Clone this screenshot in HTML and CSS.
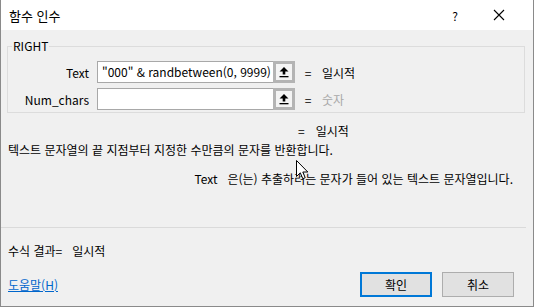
FILE: index.html
```html
<!DOCTYPE html>
<html lang="ko">
<head>
<meta charset="utf-8">
<title>함수 인수</title>
<link rel="stylesheet" href="styles.css">
</head>
<body>
<div class="window">
  <div class="titlebar">
    <span class="title">함수 인수</span>
    <span class="help">?</span>
    <span class="close">
      <svg width="12" height="12" viewBox="0 0 12 12"><path d="M1 1L11 11M11 1L1 11" stroke="#000" stroke-width="1.1" fill="none"/></svg>
    </span>
  </div>
  <div class="content">
    <fieldset class="group">
      <legend>RIGHT</legend>
      <div class="args">
        <label class="arg-label">Text</label>
        <div class="input">"000" &amp; randbetween(0, 9999)</div>
        <div class="pick"><svg width="12" height="12" viewBox="0 0 12 12"><path d="M6 1L10.5 5.5H7.3V8.5H4.7V5.5H1.5Z" fill="#000"/><rect x="1.5" y="10" width="9" height="1.3" fill="#000"/></svg></div>
        <span class="eq">=</span>
        <span class="val">일시적</span>

        <label class="arg-label">Num_chars</label>
        <div class="input"></div>
        <div class="pick"><svg width="12" height="12" viewBox="0 0 12 12"><path d="M6 1L10.5 5.5H7.3V8.5H4.7V5.5H1.5Z" fill="#000"/><rect x="1.5" y="10" width="9" height="1.3" fill="#000"/></svg></div>
        <span class="eq">=</span>
        <span class="val muted">숫자</span>
      </div>
    </fieldset>
    <div class="result-line"><span class="eq">=</span><span class="val">일시적</span></div>
    <p class="desc">텍스트 문자열의 끝 지점부터 지정한 수만큼의 문자를 반환합니다.</p>
    <p class="argdesc"><span class="argname">Text</span>은(는) 추출하려는 문자가 들어 있는 텍스트 문자열입니다.</p>
    <div class="sep"></div>
    <p class="formula">수식 결과=&nbsp;&nbsp;&nbsp;일시적</p>
    <div class="footer">
      <a class="helplink" href="#">도움말(H)</a>
      <div class="buttons">
        <button class="btn primary">확인</button>
        <button class="btn">취소</button>
      </div>
    </div>
  </div>
  <svg class="cursor" width="13" height="20" viewBox="0 0 13 20"><path d="M0.5 0.5V16.5L4.3 12.8L6.8 18.7L9.2 17.7L6.8 12H11.8Z" fill="#fff" stroke="#000" stroke-width="1"/></svg>
</div>
</body>
</html>
```
FILE: styles.css
```css
* { box-sizing: border-box; }
html, body { margin: 0; padding: 0; }
body {
  width: 534px;
  height: 307px;
  overflow: hidden;
  font-family: "Noto Sans CJK KR", "Noto Sans", sans-serif;
  font-size: 12px;
  color: #000;
}
.window {
  position: relative;
  width: 534px;
  height: 307px;
  background: #f0f0f0;
  border: 1px solid #8a8a8a;
  border-top: none;
  display: flex;
  flex-direction: column;
}
.titlebar {
  height: 30px;
  background: #fff;
  display: flex;
  align-items: center;
  padding-left: 8px;
  flex: none;
}
.title { font-size: 13px; flex: 1; }
.help { width: 20px; text-align: center; margin-right: 24px; font-size: 12px; }
.close { width: 20px; display: flex; justify-content: center; margin-right: 24px; }
.content {
  flex: 1;
  display: flex;
  flex-direction: column;
}
.group {
  margin: 9px 8px 0 6px;
  padding: 8px 0 2px 0;
  border: 1px solid #dcdcdc;
  min-width: 0;
}
.group legend {
  padding: 0 1px;
  margin-left: 4px;
  font-size: 12px;
  line-height: 14px;
}
.args {
  display: grid;
  grid-template-columns: 89px 176px 22px 26px auto;
  grid-auto-rows: 22px;
  row-gap: 5px;
  align-items: center;
}
.args .arg-label { justify-self: end; margin-right: 8px; }
.input {
  height: 22px;
  background: #fff;
  border: 1px solid #a8a8a8;
  border-right: none;
  padding: 0 4px;
  line-height: 20px;
  white-space: nowrap;
  overflow: hidden;
}
.pick {
  width: 22px;
  height: 22px;
  border: 3px solid #b4b4b4;
  background: #f4f4f4;
  display: flex;
  align-items: center;
  justify-content: center;
}
.args .eq { justify-self: center; }
.args .val { padding-left: 1px; }
.muted { color: #a8a8a8; }
.result-line {
  margin: 11px 0 0 297px;
  display: flex;
  line-height: 14px;
}
.result-line .val { padding-left: 11px; }
.desc {
  margin: 5px 0 0 7px;
  line-height: 14px;
}
.argdesc {
  margin: 15px 20px 0 0;
  text-align: right;
  line-height: 14px;
}
.argname { margin-right: 10px; }
.sep {
  height: 1px;
  background: #dadada;
  margin: 41px 7px 0 0;
}
.formula {
  margin: 16px 0 0 7px;
  line-height: 14px;
}
.footer {
  display: flex;
  align-items: center;
  justify-content: space-between;
  margin: 14px 19px 0 7px;
}
.helplink {
  color: #0066cc;
  text-decoration: underline;
  font-size: 12px;
}
.buttons { display: flex; gap: 10px; }
.btn {
  width: 72px;
  height: 25px;
  background: #e1e1e1;
  border: 1px solid #adadad;
  font-family: inherit;
  font-size: 12px;
  padding: 0;
  color: #000;
}
.btn.primary { border: 2px solid #0078d7; }
.cursor {
  position: absolute;
  left: 295px;
  top: 160px;
}
```
